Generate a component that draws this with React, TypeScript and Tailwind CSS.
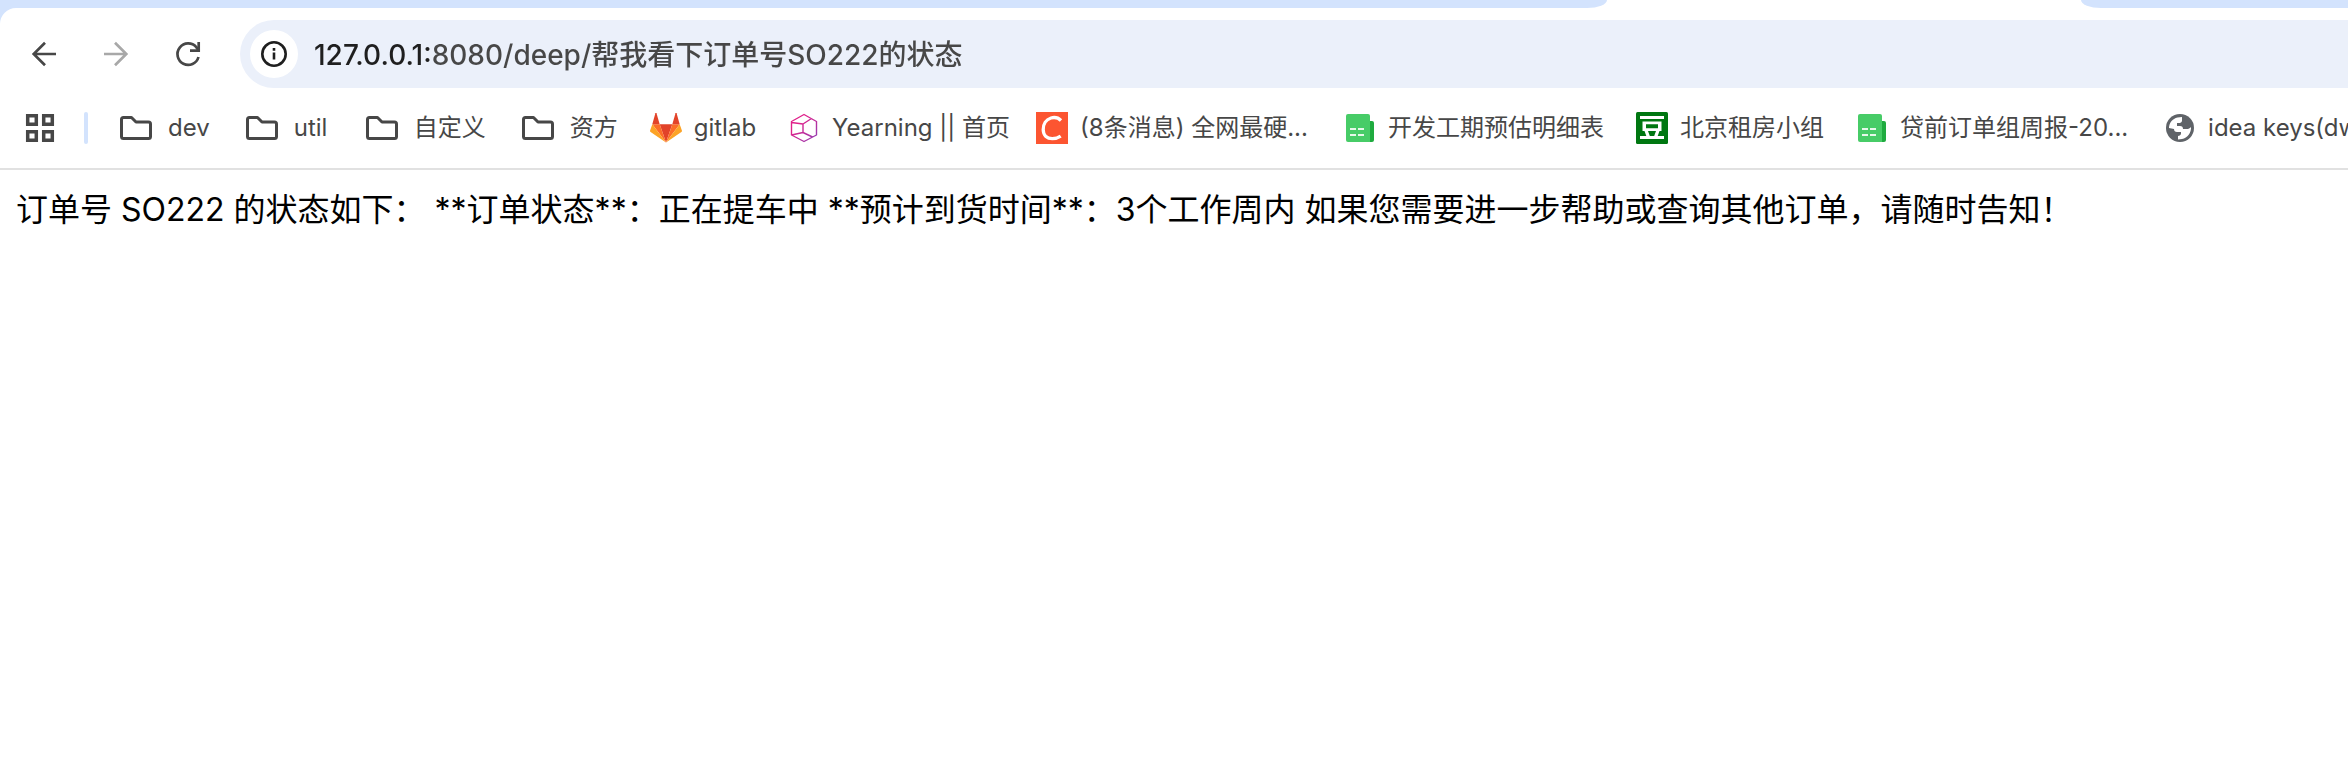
import type { ReactNode } from 'react';

const FolderIcon = () => (
  <svg viewBox="0 0 40 32" className="w-10 h-8 shrink-0" fill="none" stroke="#474747" strokeWidth="3" strokeLinejoin="round">
    <path d="M7.5 5.5h8l4.5 4.5h12.500a2 2 0 0 1 2 2v12.500a2 2 0 0 1-2 2h-25a2 2 0 0 1-2-2v-17a2 2 0 0 1 2-2z" />
  </svg>
);

const GitlabIcon = () => (
  <svg viewBox="0 0 32 32" className="size-8 shrink-0">
    <path d="M16 30.500 9.700 12.300h12.600z" fill="#e24329" />
    <path d="M16 30.500 9.700 12.300H2.300z" fill="#fc6d26" />
    <path d="M2.300 12.300 0.100 18.500a1.300 1.300 0 0 0 .5 1.500L16 30.500z" fill="#fca326" />
    <path d="M2.300 12.300h7.400L6.500 1.300c-.2-.5-.9-.5-1.100 0z" fill="#e24329" />
    <path d="M16 30.500 22.300 12.300h7.400z" fill="#fc6d26" />
    <path d="M29.700 12.300l2.200 6.200a1.300 1.300 0 0 1-.5 1.500L16 30.500z" fill="#fca326" />
    <path d="M29.700 12.300h-7.400l3.200-11c.2-.5.9-.5 1.100 0z" fill="#e24329" />
  </svg>
);

const YearningIcon = () => (
  <svg viewBox="0 0 32 32" className="size-8 shrink-0" fill="none" strokeWidth="1.400" strokeLinejoin="round">
    <defs>
      <linearGradient id="yearning" x1="0" y1="0" x2="1" y2="1">
        <stop offset="0.3" stopColor="#e0218a" />
        <stop offset="1" stopColor="#8e3fb5" />
      </linearGradient>
    </defs>
    <g stroke="url(#yearning)">
      <path d="M16 2.500 28.500 9.500v13.500L16 29.500 3.500 23V9.500zM3.500 10.500 15 12l8.500-5.500M15 12v8.500L3.500 23M15 20.500l9.500 4.500" />
    </g>
  </svg>
);

const CsdnIcon = () => (
  <svg viewBox="0 0 32 32" className="size-8 shrink-0">
    <path d="M0 0h32v32H0z" fill="#fc5531" />
    <path d="M25 8.500C22.500 6 18.500 5 15 6 10 7.600 7 12.500 7.200 17.800c.2 6 4 8.900 9 8.900 3.300 0 6-.8 8.500-2.500" fill="none" stroke="#fff" strokeWidth="3.300" />
  </svg>
);

const SheetIcon = () => (
  <svg viewBox="0 0 32 32" className="size-8 shrink-0">
    <path d="M24 9h4a2 2 0 0 1 2 2v17a2 2 0 0 1-2 2h-4z" fill="#1fab3f" />
    <path d="M4 2h20a2 2 0 0 1 2 2v26H4a2 2 0 0 1-2-2V4a2 2 0 0 1 2-2z" fill="#47cc67" />
    <path d="M6 16h6v2H6zM14 16h6v2h-6zM6 22h6v2H6zM14 22h6v2h-6z" fill="#e6f8ea" />
  </svg>
);

const DoubanIcon = () => (
  <svg viewBox="0 0 32 32" className="size-8 shrink-0">
    <rect width="32" height="32" rx="1.500" fill="#007711" />
    <path d="M4 4h24v3H4zM4 24h24v3H4z" fill="#fff" />
    <path d="M6.500 9.500h19v9.500h-19zM10 12.300v4h12v-4z" fill="#fff" fillRule="evenodd" />
    <path d="M8.500 19H12l2 5.500h-3.500zM23.500 19H20l-2 5.500h3.500z" fill="#fff" />
  </svg>
);

const GlobeIcon = () => (
  <svg viewBox="0 0 32 32" className="size-8 shrink-0">
    <circle cx="16" cy="16" r="14" fill="#5f6368" />
    <path d="M5 16c0-5 3.500-9.500 8.500-10.600L18 5v3.500c0 1.500-1 2.500-2.500 2.500H13v3h3c2 0 3 1 3 3h4c1.500 0 2.500-.5 4-2 .5 5.500-3.500 11-9 12l-4 .5V24c1.500 0 3-1 3-2.500V20h-4c-2 0-3-1-3-3z" fill="#fff" />
  </svg>
);

type Bookmark = { label: string; icon: ReactNode; width?: string };

const bookmarks: Bookmark[] = [
  { label: 'gitlab', icon: <GitlabIcon /> },
  { label: 'Yearning || 首页', icon: <YearningIcon />, width: 'w-[172px]' },
  { label: '(8条消息) 全网最硬...', icon: <CsdnIcon />, width: 'w-[232px]' },
  { label: '开发工期预估明细表', icon: <SheetIcon /> },
  { label: '北京租房小组', icon: <DoubanIcon /> },
  { label: '贷前订单组周报-20...', icon: <SheetIcon />, width: 'w-[232px]' },
  { label: 'idea keys(dw', icon: <GlobeIcon /> },
];

const folders = ['dev', 'util', '自定义', '资方'];

const Toolbar = () => (
  <div className="flex items-center h-[68px] mt-3 pl-7">
    <div className="flex items-center gap-10">
      <button aria-label="返回" className="size-8">
        <svg viewBox="0 0 32 32" fill="none" stroke="#474747" strokeWidth="2.700">
          <path d="M28 16H6M17 4.700 5.700 16 17 27.300" />
        </svg>
      </button>
      <button aria-label="前进" className="size-8">
        <svg viewBox="0 0 32 32" fill="none" stroke="#a8a8a8" strokeWidth="2.700">
          <path d="M4 16h22M15 4.700 26.300 16 15 27.300" />
        </svg>
      </button>
      <button aria-label="重新加载" className="size-8">
        <svg viewBox="0 0 32 32" fill="none" stroke="#474747" strokeWidth="2.700">
          <path d="M26.500 19A10.700 10.700 0 1 1 24.300 9.200l2 2.800" />
          <path d="M26.700 4v8.700H18" />
        </svg>
      </button>
    </div>
    <div className="flex flex-1 items-center h-full ml-9 pl-[10px] rounded-l-full bg-[#ebf0fa]">
      <button aria-label="网站信息" className="flex items-center justify-center size-12 rounded-full bg-white">
        <svg viewBox="0 0 32 32" className="size-8" fill="none" stroke="#1f1f1f" strokeWidth="2.600">
          <circle cx="16" cy="16" r="11.700" />
          <path d="M16 14.500v7M16 10v2.700" />
        </svg>
      </button>
      {/* host part is darker than the rest of the url */}
      <input
        aria-label="地址栏"
        defaultValue="127.0.0.1:8080/deep/帮我看下订单号SO222的状态"
        className="flex-1 ml-4 h-12 pb-[2px] text-[28px] font-medium text-transparent caret-black outline-none bg-clip-text bg-[linear-gradient(90deg,#1f1f1f_119px,#474747_119px)]"
      />
    </div>
  </div>
);

const BookmarkBar = () => (
  <nav className="flex items-center h-[82px] pl-6 border-b-2 border-[#e1e1e1] text-2xl text-[#474747] whitespace-nowrap overflow-hidden">
    <button aria-label="应用" className="size-8 shrink-0">
      <svg viewBox="0 0 32 32" fill="none" stroke="#474747" strokeWidth="3.500">
        <path d="M3.700 3.700h8.600v8.600H3.700zM19.700 3.700h8.600v8.600h-8.600zM3.700 19.700h8.600v8.600H3.700zM19.700 19.700h8.600v8.600h-8.600z" />
      </svg>
    </button>
    <div className="w-1 h-8 mx-7 shrink-0 rounded-full bg-[#d3e3fd]" />
    <div className="flex items-center gap-8">
      {folders.map((name) => (
        <button key={name} className="flex items-center gap-3">
          <FolderIcon />
          <span className="min-w-9 text-left">{name}</span>
        </button>
      ))}
      {bookmarks.map(({ label, icon, width }) => (
        <a key={label} href="#" className="flex items-center gap-3">
          {icon}
          <span className={width}>{label}</span>
        </a>
      ))}
    </div>
  </nav>
);

export default function App() {
  return (
    <div className="min-h-screen overflow-hidden bg-white font-['Inter','Noto_Sans_CJK_SC',sans-serif]">
      <header className="bg-[#d3e3fd]">
        <div className="flex justify-between h-2 bg-white">
          <div className="w-[1607px] rounded-[0_0_20px_0/0_0_8px_0] bg-[#d3e3fd]" />
          <div className="w-[267px] rounded-[0_0_0_20px/0_0_0_8px] bg-[#d3e3fd]" />
        </div>
        <div className="overflow-hidden rounded-tl-2xl bg-white">
          <Toolbar />
          <BookmarkBar />
        </div>
      </header>
      <main className="px-4 py-4 text-[32px] leading-[48px] text-black">
        订单号 SO222 的状态如下： **订单状态**：正在提车中 **预计到货时间**：3个工作周内 如果您需要进一步帮助或查询其他订单，请随时告知！
      </main>
    </div>
  );
}
